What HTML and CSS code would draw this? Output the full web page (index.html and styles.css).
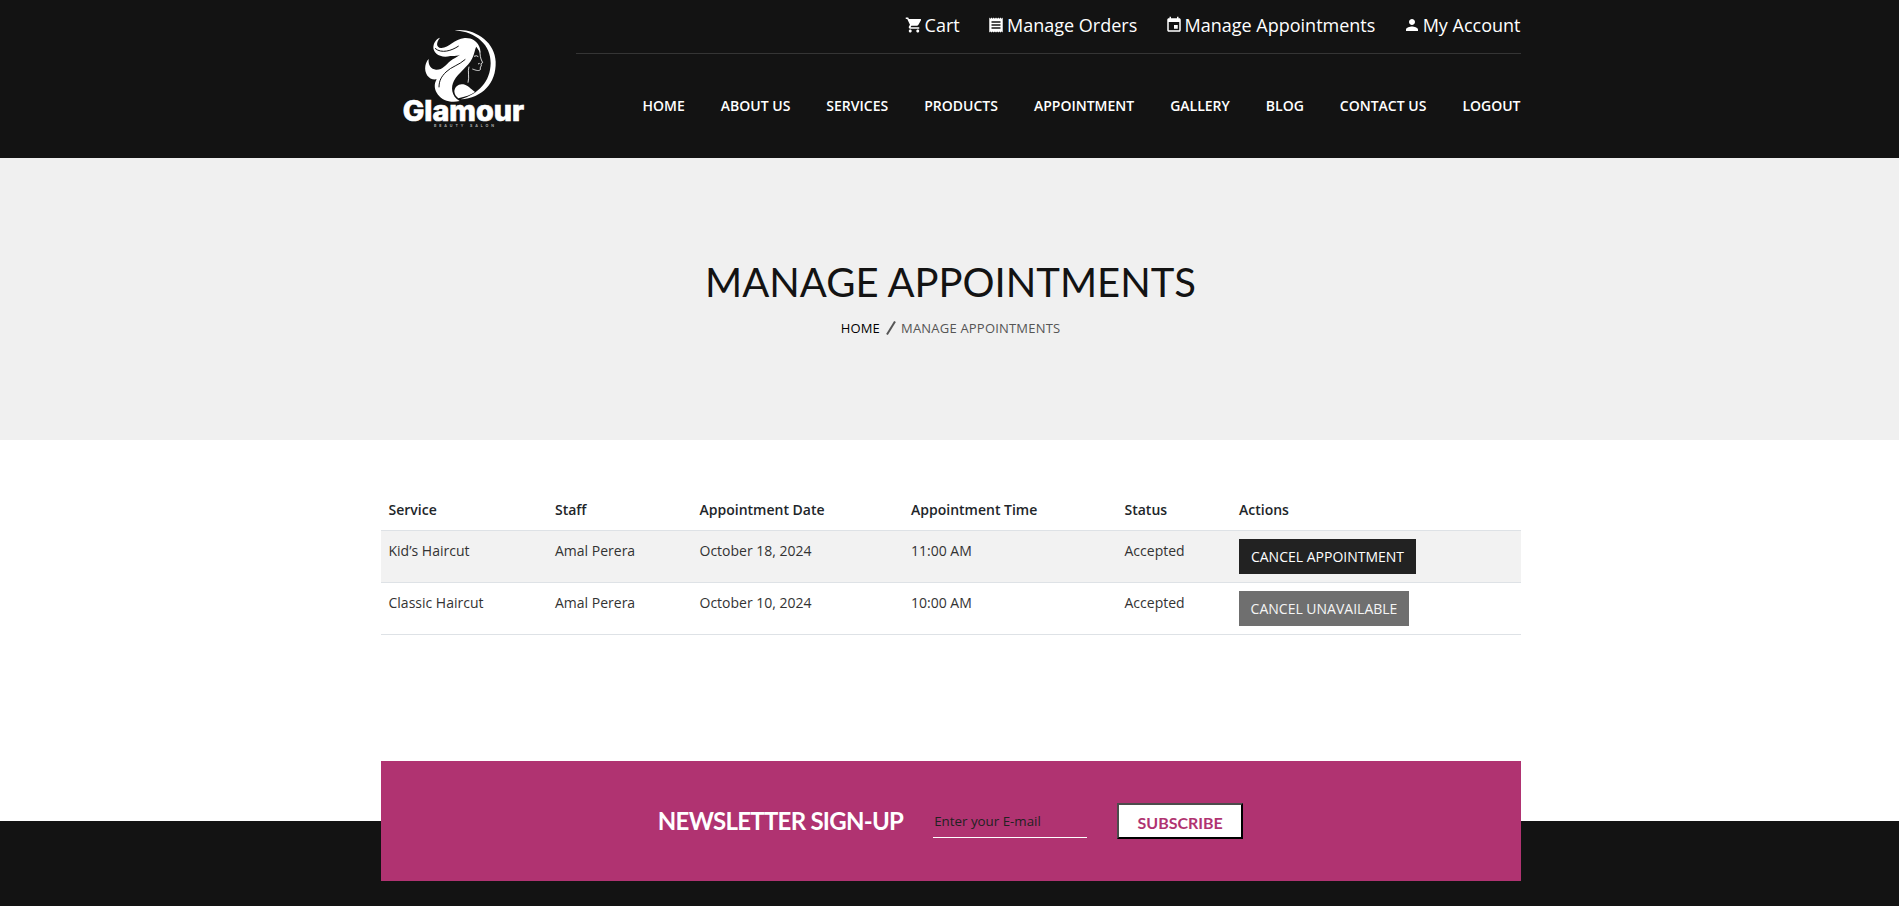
FILE: index.html
```
<!DOCTYPE html>
<html lang="en">
<head>
<meta charset="utf-8">
<title>Manage Appointments</title>
<link rel="stylesheet" href="styles.css">
</head>
<body>
<header class="header">
  <div class="container header-row">
    <a class="logo" href="#">
      <svg viewBox="0 0 450 360" width="150" height="120">
        <path fill="#fff" d="M194 31C255 24 315 66 317 125C319 190 277 233 212 238C266 222 301 185 302 130C303 76 260 36 194 31Z"/>
        <path fill="#fff" d="M150 53C138 67 138 82 153 84C177 85 192 57 224 54C246 53 260 63 267 78C270 86 272 91 271 99C266 90 263 86 259 80C254 88 254 102 246 116C234 140 205 158 192 182C182 200 183 228 209 243C181 249 157 241 144 224C133 210 131 193 140 178C118 182 102 161 106 138C108 129 111 122 116 117C114 136 123 148 138 149C158 150 166 135 182 122C190 116 200 112 210 104C200 108 190 109 181 108C151 116 129 99 130 81C131 67 139 57 150 53Z"/>
        <path fill="none" stroke="#131313" stroke-width="3" d="M135 85C155 102 185 92 206 78M226 118C206 136 184 140 168 156C154 170 147 182 147 202"/>
        <path fill="#fff" d="M193 214C194 199 207 190 220 193C234 196 242 207 255 216C243 225 225 230 205 235C198 229 193 223 193 214Z"/>
        <path fill="none" stroke="#fff" stroke-width="2.5" d="M266 84C272 99 269 105 273 117L278 128L273 131L274 138L271 141L271 149C265 155 254 149 247 147M237 140C232 155 239 169 234 188M252 109Q260 105 265 110M269 130L264 132"/>
        <text class="logo-name" x="38" y="302" textLength="364" lengthAdjust="spacingAndGlyphs">Glamour</text>
        <text class="logo-sub" x="132" y="321" textLength="180">BEAUTY SALON</text>
      </svg>
    </a>
    <div class="header-main">
      <ul class="top-links">
        <li><svg class="ico" viewBox="0 0 24 24"><path d="M7 18c-1.100 0-2 .9-2 2s.9 2 2 2 2-.9 2-2-.9-2-2-2zM1 2v2h2l3.600 7.600-1.400 2.400c-.7 1.300.3 3 1.800 3h12v-2H7.400l1.100-2h7.500c.7 0 1.400-.4 1.700-1l3.600-6.500c.4-.7-.1-1.500-.9-1.500H5.200l-.9-2H1zm16 16c-1.100 0-2 .9-2 2s.9 2 2 2 2-.9 2-2-.9-2-2-2z"/></svg><a href="#">Cart</a></li>
        <li><svg class="ico" viewBox="0 0 24 24"><path d="M18 17H6v-2h12v2zm0-4H6v-2h12v2zm0-4H6V7h12v2zM3 22l1.500-1.500L6 22l1.500-1.500L9 22l1.500-1.500L12 22l1.500-1.500L15 22l1.500-1.500L18 22l1.500-1.500L21 22V2l-1.500 1.500L18 2l-1.500 1.500L15 2l-1.500 1.500L12 2l-1.500 1.500L9 2 7.500 3.500 6 2 4.500 3.500 3 2v20z"/></svg><a href="#">Manage Orders</a></li>
        <li><svg class="ico" viewBox="0 0 24 24"><path d="M17 12h-5v5h5v-5zM16 1v2H8V1H6v2H5c-1.100 0-2 .9-2 2v14c0 1.100.9 2 2 2h14c1.100 0 2-.9 2-2V5c0-1.100-.9-2-2-2h-1V1h-2zm3 18H5V8h14v11z"/></svg><a href="#">Manage Appointments</a></li>
        <li><svg class="ico" viewBox="0 0 24 24"><path d="M12 12c2.200 0 4-1.800 4-4s-1.800-4-4-4-4 1.800-4 4 1.800 4 4 4zm0 2c-2.700 0-8 1.300-8 4v2h16v-2c0-2.700-5.300-4-8-4z"/></svg><a href="#">My Account</a></li>
      </ul>
      <nav class="nav">
        <a href="#">HOME</a><a href="#">ABOUT US</a><a href="#">SERVICES</a><a href="#">PRODUCTS</a><a href="#">APPOINTMENT</a><a href="#">GALLERY</a><a href="#">BLOG</a><a href="#">CONTACT US</a><a href="#">LOGOUT</a>
      </nav>
    </div>
  </div>
</header>
<section class="hero">
  <div class="container">
    <h1>MANAGE APPOINTMENTS</h1>
    <p class="crumbs"><a href="#">HOME</a><svg width="10" height="14" viewBox="0 0 10 14"><path d="M1 13.500L9 .5" stroke="#555" stroke-width="2"/></svg><span>MANAGE APPOINTMENTS</span></p>
  </div>
</section>
<main class="container content">
  <table class="table">
    <colgroup><col class="c1"><col class="c2"><col class="c3"><col class="c4"><col class="c5"><col></colgroup>
    <thead>
      <tr><th>Service</th><th>Staff</th><th>Appointment Date</th><th>Appointment Time</th><th>Status</th><th>Actions</th></tr>
    </thead>
    <tbody>
      <tr><td>Kid’s Haircut</td><td>Amal Perera</td><td>October 18, 2024</td><td>11:00 AM</td><td>Accepted</td><td><button class="btn btn-a">CANCEL APPOINTMENT</button></td></tr>
      <tr><td>Classic Haircut</td><td>Amal Perera</td><td>October 10, 2024</td><td>10:00 AM</td><td>Accepted</td><td><button class="btn btn-b" disabled>CANCEL UNAVAILABLE</button></td></tr>
    </tbody>
  </table>
</main>
<footer class="footer">
  <form class="container newsletter">
    <h2>NEWSLETTER SIGN-UP</h2>
    <input type="email" placeholder="Enter your E-mail">
    <button type="button" class="subscribe">SUBSCRIBE</button>
  </form>
</footer>
</body>
</html>
```
FILE: styles.css
```
* { box-sizing: border-box; }
html, body { margin: 0; height: 906px; overflow: hidden; }
body { font-family: "Open Sans", "Noto Sans", sans-serif; font-size: 14px; line-height: 24px; color: #222; background: #fff; }
a { color: inherit; text-decoration: none; }
h1, h2, p, ul { margin: 0; padding: 0; font-weight: 400; }
.container { width: 1140px; margin-left: 380.500px; }

.header { height: 158px; background: #131313; color: #fff; }
.header-row { display: flex; height: 100%; }
.logo { width: 195px; padding: 20px 0 0 9.500px; }
.logo svg { display: block; }
.logo-name { font: 800 84px Inter, sans-serif; fill: #fff; stroke: #fff; stroke-width: 2px; }
.logo-sub { font: 600 11px Inter, sans-serif; fill: #bbb; }
.header-main { width: 945px; }
.top-links { display: flex; justify-content: flex-end; gap: 27.300px; height: 54px; padding-top: 13px; list-style: none; border-bottom: 1px solid #353535; font-size: 18px; }
.top-links li { display: flex; align-items: center; gap: 2px; height: 24px; }
.ico { width: 18px; height: 18px; fill: #fff; }
.nav { display: flex; justify-content: flex-end; gap: 36px; padding-top: 40px; font-weight: 600; }

.hero { height: 282px; background: #f0f0f0; text-align: center; padding-top: 99px; }
.hero h1 { font: 400 40px/50px Lato, sans-serif; color: #131313; }
.crumbs { display: flex; justify-content: center; align-items: center; gap: 5.500px; padding-top: 9px; font-size: 13px; font-weight: 500; letter-spacing: .2px; color: #555; }
.crumbs a { color: #000; }

.content { height: 321px; padding-top: 50px; }
.table { width: 100%; border-collapse: separate; border-spacing: 0; table-layout: fixed; border-bottom: 1px solid #dee2e6; }
.c1 { width: 166.500px; }
.c2 { width: 144.500px; }
.c3 { width: 211.500px; }
.c4 { width: 213.500px; }
.c5 { width: 114.500px; }
th { padding: 8px; text-align: left; font-weight: 600; line-height: 24px; color: #212529; }
td { padding: 8px; border-top: 1px solid #dee2e6; vertical-align: top; color: #333; }
tbody tr:first-child { background: #f2f2f2; }
.btn { display: block; height: 35px; padding: 0; border: 0; background: #222; color: #fff; font: 400 14px "Open Sans", sans-serif; }
.btn-a { width: 177px; }
.btn-b { width: 170px; background: #6f6f6f; color: #f5f5f5; }

.footer { height: 145px; background: linear-gradient(#fff 60px, #131313 60px); }
.newsletter { display: flex; justify-content: center; height: 120px; background: #b03371; }
.newsletter h2 { padding-top: 45px; margin-right: 30px; font: 700 24px/30px Lato, sans-serif; letter-spacing: -.73px; color: #fff; }
.newsletter input { width: 154px; height: 28px; margin: 49px 30px 0 0; padding: 0 1px 5px; border: 0; border-bottom: 1px solid #fff; background: none; font: 400 13.333px "Open Sans", sans-serif; }
.newsletter input::placeholder { color: #222; opacity: 1; }
.subscribe { width: 126px; height: 36px; margin-top: 42px; padding: 3px 0 0; border: 2px outset #000; border-color: #4c4c4c #000 #000 #4c4c4c; background: #fff; color: #b03371; font: 700 16px Lato, sans-serif; }
```
